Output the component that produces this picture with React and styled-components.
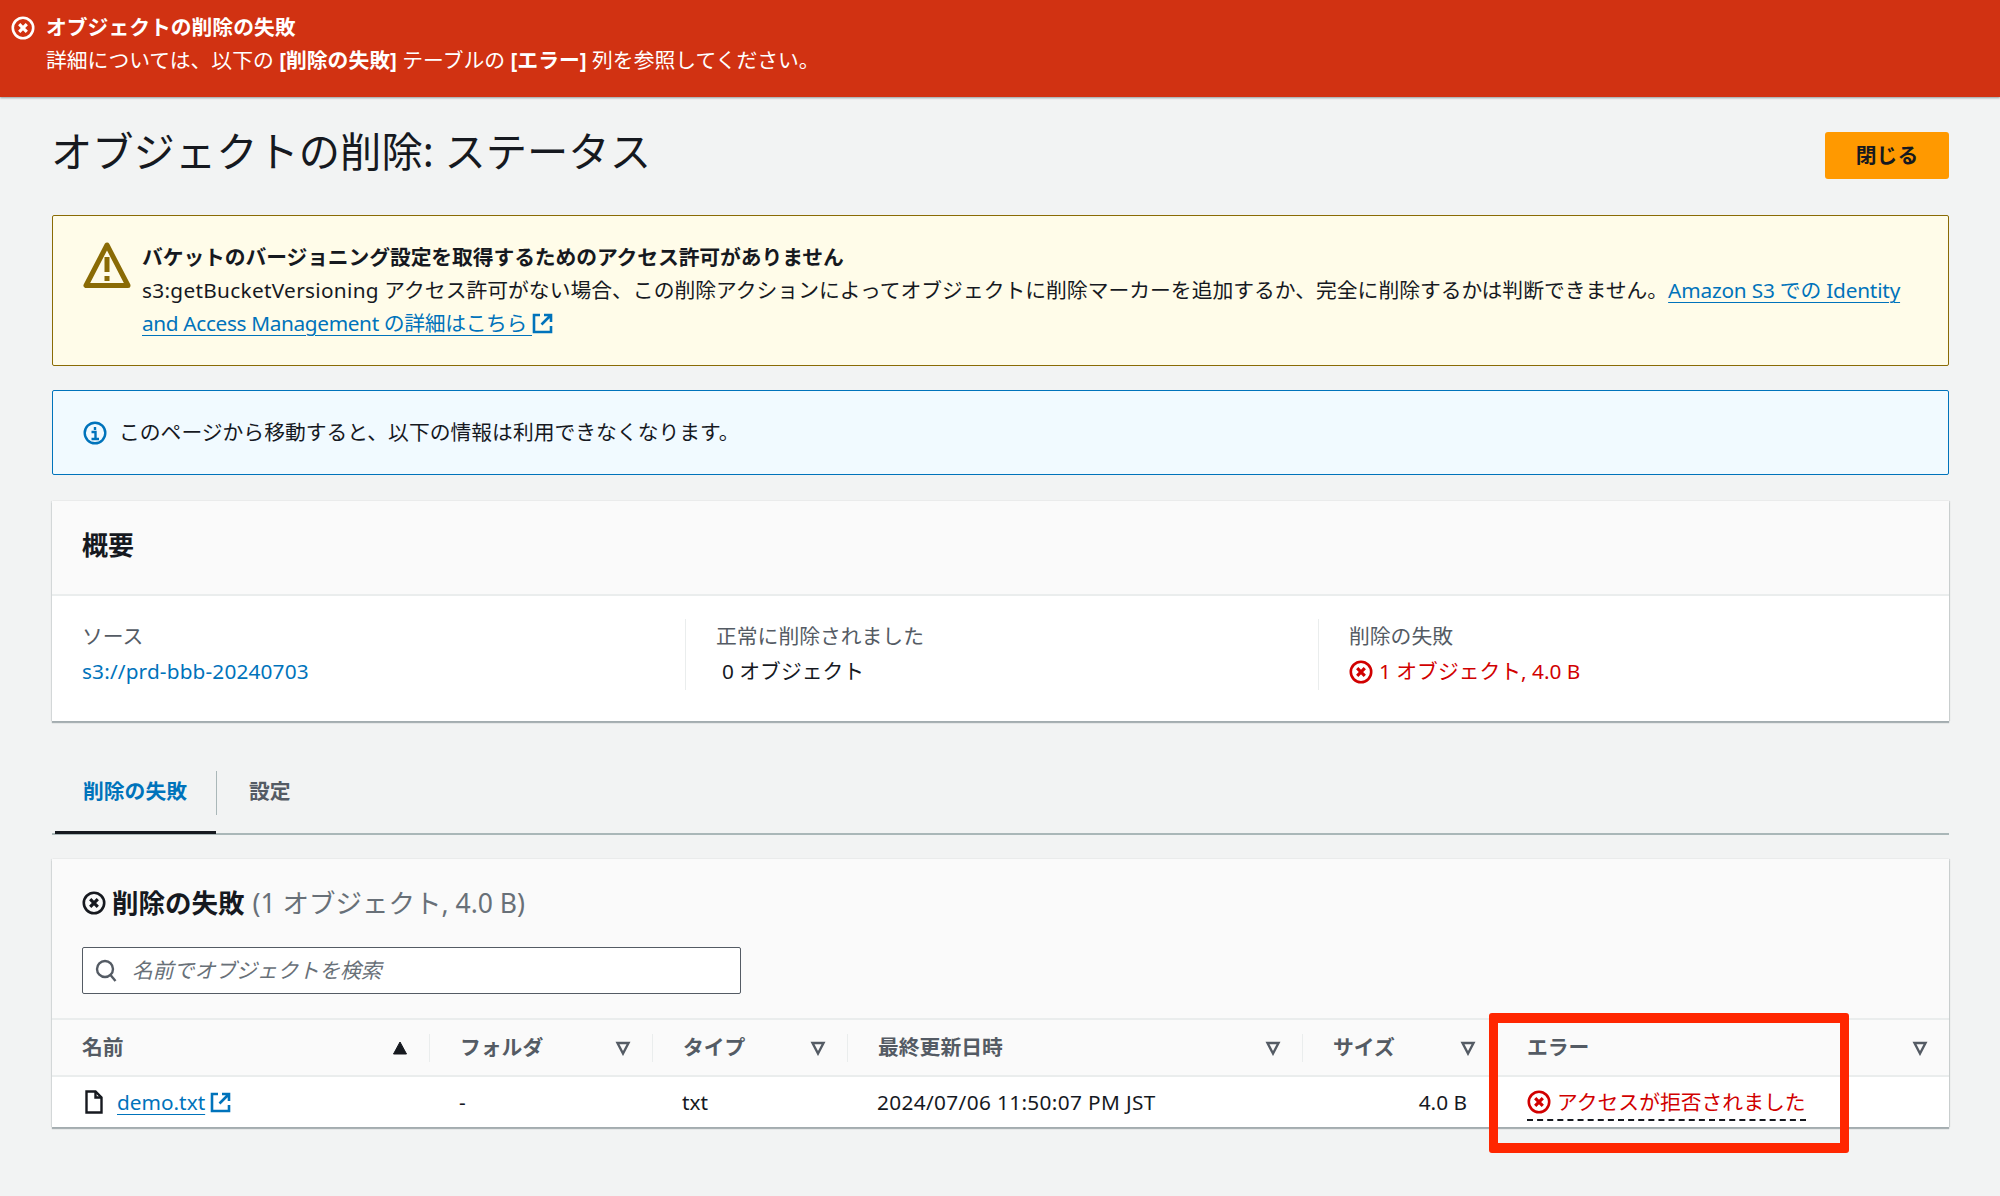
import React from "react";
import styled, { createGlobalStyle } from "styled-components";

const GlobalStyle = createGlobalStyle`
  html, body {
    margin: 0;
    background: #f2f3f3;
  }
  body {
    font-family: "Noto Sans", "Noto Sans CJK JP", sans-serif;
    font-size: 20.8px;
    line-height: 33px;
    color: #16191f;
  }
  * { box-sizing: border-box; }
`;

const Page = styled.div`
  min-height: 1196px;
`;

const Banner = styled.div`
  display: flex;
  gap: 11px;
  height: 97px;
  padding: 11px 11px 0;
  background: #d13212;
  color: #fff;
  box-shadow: 0 1px 2px rgba(0, 28, 36, 0.4);
`;

const BannerIcon = styled.span`
  display: flex;
  height: 33px;
  align-items: center;
`;

const BannerTitle = styled.div`
  font-weight: 700;
`;

const Main = styled.main`
  display: flex;
  flex-direction: column;
  padding: 0 51px 0 52px;
`;

const HeadRow = styled.div`
  display: flex;
  justify-content: space-between;
  align-items: flex-start;
  padding-top: 29px;
  height: 118px;
`;

const Title = styled.h1`
  margin: 0 0 0 -1px;
  font-size: 41.3px;
  line-height: 50px;
  font-weight: 400;
`;

const CloseButton = styled.button`
  width: 124px;
  height: 47px;
  margin-top: 6px;
  border: 0;
  border-radius: 3px;
  background: #ff9900;
  color: #16191f;
  font: inherit;
  font-weight: 700;
`;

const Flash = styled.div`
  display: flex;
  border: 1px solid ${(p) => p.$border};
  border-radius: 2px;
  background: ${(p) => p.$bg};
`;

const WarningFlash = styled(Flash)`
  gap: 11px;
  padding: 25px 0 25px 30px;
`;

const InfoFlash = styled(Flash)`
  align-items: center;
  gap: 12px;
  height: 85px;
  margin: 24px 0 26px;
  padding: 0 30px;
`;

const WarningBody = styled.div`
  white-space: nowrap;
`;

const Bold = styled.div`
  font-weight: 700;
  letter-spacing: -0.1px;
`;

const Link = styled.a`
  color: #0073bb;
  text-decoration: ${(p) => (p.$plain ? "none" : "underline")};
  text-underline-offset: 4px;
  text-decoration-thickness: 1px;
  letter-spacing: ${(p) => p.$ls || "normal"};
`;

const Tracked = styled.span`
  letter-spacing: ${(p) => p.$ls};
`;

const ExtIcon = styled.span`
  display: inline-flex;
  vertical-align: -3px;
  margin-left: ${(p) => p.$ml || "3px"};
`;

const Card = styled.section`
  background: #fff;
  box-shadow: 0 2px 1px rgba(0, 28, 36, 0.3), 1px 0 1px rgba(0, 28, 36, 0.12), -1px 0 1px rgba(0, 28, 36, 0.08);
`;

const CardHeader = styled.div`
  display: flex;
  align-items: center;
  height: 95px;
  padding: 0 30px 5px;
  background: #fafafa;
  border-bottom: 2px solid #eaeded;
  font-size: 26px;
  font-weight: 700;
`;

const SummaryGrid = styled.div`
  display: grid;
  grid-template-columns: 633px 633px 1fr;
  padding: 23px 0 31px;
`;

const SummaryCol = styled.div`
  height: 71px;
  padding: 0 30px;
  border-left: ${(p) => (p.$first ? "0" : "1px solid #eaeded")};
  line-height: 35px;
`;

const Label = styled.div`
  color: #545b64;
`;

const ErrorValue = styled.div`
  display: flex;
  align-items: center;
  gap: 6px;
  color: #d10000;
`;

const PlainValue = styled.div`
  padding-left: 6px;
`;

const Tabs = styled.div`
  display: flex;
  align-items: stretch;
  height: 114px;
  padding: 50px 0 0 3px;
  border-bottom: 2px solid #aab7b8;
`;

const Tab = styled.div`
  display: flex;
  align-items: flex-start;
  width: ${(p) => p.$w};
  padding: 4px 0 0 ${(p) => p.$pad};
  font-weight: 700;
  color: ${(p) => (p.$active ? "#0073bb" : "#545b64")};
  border-bottom: ${(p) => (p.$active ? "3px solid #16191f" : "0")};
  margin-bottom: -1px;
  position: relative;
  &::after {
    content: "";
    display: ${(p) => (p.$active ? "block" : "none")};
    position: absolute;
    right: -1px;
    top: 0;
    height: 44px;
    width: 1px;
    background: #aab7b8;
  }
`;

const TableWrap = styled.div`
  position: relative;
  margin-top: 24px;
`;

const TableTop = styled.div`
  height: 159px;
  padding: 27px 30px 0;
  background: #fafafa;
`;

const TableTitle = styled.div`
  display: flex;
  align-items: center;
  gap: 6px;
  font-size: 26.5px;
  line-height: 34px;
  font-weight: 700;
`;

const Count = styled.span`
  font-weight: 400;
  color: #687078;
  margin-left: 2px;
`;

const SearchBox = styled.div`
  display: flex;
  align-items: center;
  gap: 15px;
  width: 659px;
  height: 47px;
  margin-top: 27px;
  padding-left: 12px;
  border: 1px solid #545b64;
  border-radius: 2px;
  background: #fff;
  color: #687078;
  font-style: italic;
`;

const columns = "377px 223px 195px 455px 195px 1fr";

const HeadGrid = styled.div`
  display: grid;
  grid-template-columns: ${columns};
  height: 59px;
  align-items: center;
  background: #fafafa;
  border-top: 2px solid #eaeded;
  border-bottom: 2px solid #eaeded;
`;

const HeadCell = styled.div`
  display: flex;
  align-items: center;
  justify-content: space-between;
  height: 28px;
  padding: 0 21px 0 30px;
  font-weight: 700;
  color: #545b64;
  border-left: ${(p) => (p.$first ? "0" : "1px solid #eaeded")};
`;

const BodyGrid = styled.div`
  display: grid;
  grid-template-columns: ${columns};
  height: 50px;
  align-items: center;
`;

const BodyCell = styled.div`
  display: flex;
  align-items: center;
  justify-content: ${(p) => (p.$right ? "flex-end" : "flex-start")};
  padding: ${(p) => (p.$right ? "0 30px 0 0" : "0 0 0 30px")};
`;

const FileLink = styled.span`
  display: flex;
  align-items: center;
  gap: 14px;
  padding-left: 3px;
`;

const ErrorCell = styled.span`
  display: flex;
  align-items: center;
  gap: 6px;
  height: 35px;
  color: #d10000;
  border-bottom: 2px dashed #16191f;
  margin-top: 2px;
`;

const Annotation = styled.div`
  position: absolute;
  left: 1437px;
  top: 154px;
  width: 360px;
  height: 140px;
  border-style: solid;
  border-color: #ff2600;
  border-width: 10px 9px;
  border-radius: 3px;
  pointer-events: none;
`;

const NegativeIcon = ({ size = 24, color = "currentColor", weight = 2.6 }) => (
  <svg width={size} height={size} viewBox="0 0 24 24" fill="none" stroke={color}>
    <circle cx="12" cy="12" r="10.2" strokeWidth={weight} />
    <path d="M8.2 8.2l7.6 7.6M15.8 8.2l-7.6 7.6" strokeWidth="3.2" />
  </svg>
);

const ExternalIcon = ({ size = 21 }) => (
  <svg width={size} height={size} viewBox="0 0 21 21" fill="none" stroke="#0073bb" strokeWidth="2.6">
    <path d="M8 2H2v17h17v-6" />
    <path d="M12 2h7v7M19 2L9.5 11.5" />
  </svg>
);

const WarningIcon = () => (
  <svg width="48" height="48" viewBox="0 0 48 48" fill="none">
    <path d="M24 4L3 44.5h42z" stroke="#8a6b05" strokeWidth="5" strokeLinejoin="round" />
    <path d="M24 16v15M24 35v5" stroke="#8a6b05" strokeWidth="5" />
  </svg>
);

const InfoIcon = () => (
  <svg width="24" height="24" viewBox="0 0 24 24" fill="none" stroke="#0073bb">
    <circle cx="12" cy="12" r="10.3" strokeWidth="2.4" />
    <path d="M12 6v3M8.5 11H12.5V18M8.5 18h7.5" strokeWidth="2.4" />
  </svg>
);

const SearchIcon = () => (
  <svg width="22" height="24" viewBox="0 0 22 24" fill="none" stroke="#545b64" strokeWidth="2.4">
    <circle cx="10" cy="10" r="8" />
    <path d="M15.5 16l5 6" />
  </svg>
);

const FileIcon = () => (
  <svg width="18" height="24" viewBox="0 0 18 24" fill="none" stroke="#16191f" strokeWidth="2.4">
    <path d="M1.5 1.5h9l6 6v15h-15z" />
    <path d="M10.5 1.5v6h6" />
  </svg>
);

const SortIcon = ({ active }) => (
  <svg width="16" height="16" viewBox="0 0 16 16" fill={active ? "#16191f" : "none"} stroke={active ? "#16191f" : "#545b64"} strokeWidth="2.4">
    {active ? <path d="M8 2l6.5 12h-13z" strokeWidth="1" /> : <path d="M2.5 3h11L8 13.5z" />}
  </svg>
);

const headers = [
  { name: "名前", active: true },
  { name: "フォルダ" },
  { name: "タイプ" },
  { name: "最終更新日時" },
  { name: "サイズ" },
  { name: "エラー" },
];

export default function App() {
  return (
    <Page>
      <GlobalStyle />
      <Banner>
        <BannerIcon>
          <NegativeIcon color="#fff" />
        </BannerIcon>
        <div>
          <BannerTitle>オブジェクトの削除の失敗</BannerTitle>
          <div>
            詳細については、以下の <b>[削除の失敗]</b> テーブルの <b>[エラー]</b> 列を参照してください。
          </div>
        </div>
      </Banner>
      <Main>
        <HeadRow>
          <Title>オブジェクトの削除: ステータス</Title>
          <CloseButton>閉じる</CloseButton>
        </HeadRow>

        <WarningFlash $border="#8a6b05" $bg="#fffce9">
          <WarningIcon />
          <WarningBody>
            <Bold>バケットのバージョニング設定を取得するためのアクセス許可がありません</Bold>
            <div>
              <Tracked $ls="0.3px">s3:getBucketVersioning</Tracked> アクセス許可がない場合、この削除アクションによってオブジェクトに削除マーカーを追加するか、完全に削除するかは判断できません。
              <Link $ls="-0.2px">Amazon S3 での Identity</Link>
            </div>
            <div>
              <Link $ls="-0.35px">and Access Management の詳細はこちら </Link>
              <ExtIcon $ml="0">
                <ExternalIcon />
              </ExtIcon>
            </div>
          </WarningBody>
        </WarningFlash>

        <InfoFlash $border="#0073bb" $bg="#f1faff">
          <InfoIcon />
          このページから移動すると、以下の情報は利用できなくなります。
        </InfoFlash>

        <Card>
          <CardHeader>概要</CardHeader>
          <SummaryGrid>
            <SummaryCol $first>
              <Label>ソース</Label>
              <Link $plain $ls="0.15px">s3://prd-bbb-20240703</Link>
            </SummaryCol>
            <SummaryCol>
              <Label>正常に削除されました</Label>
              <PlainValue>0 オブジェクト</PlainValue>
            </SummaryCol>
            <SummaryCol>
              <Label>削除の失敗</Label>
              <ErrorValue>
                <NegativeIcon />1 オブジェクト, 4.0 B
              </ErrorValue>
            </SummaryCol>
          </SummaryGrid>
        </Card>

        <Tabs>
          <Tab $active $w="161px" $pad="28px">
            削除の失敗
          </Tab>
          <Tab $w="120px" $pad="33px">
            設定
          </Tab>
        </Tabs>

        <TableWrap>
          <Card>
            <TableTop>
              <TableTitle>
                <NegativeIcon />
                削除の失敗 <Count>(1 オブジェクト, 4.0 B)</Count>
              </TableTitle>
              <SearchBox>
                <SearchIcon />
                名前でオブジェクトを検索
              </SearchBox>
            </TableTop>
            <HeadGrid>
              {headers.map((h, i) => (
                <HeadCell key={h.name} $first={i === 0 || i === 5}>
                  {h.name}
                  <SortIcon active={h.active} />
                </HeadCell>
              ))}
            </HeadGrid>
            <BodyGrid>
              <BodyCell>
                <FileLink>
                  <FileIcon />
                  <span>
                    <Link>demo.txt</Link>
                    <ExtIcon $ml="5px">
                      <ExternalIcon />
                    </ExtIcon>
                  </span>
                </FileLink>
              </BodyCell>
              <BodyCell>-</BodyCell>
              <BodyCell>txt</BodyCell>
              <BodyCell>
                <Tracked $ls="0.35px">2024/07/06 11:50:07 PM JST</Tracked>
              </BodyCell>
              <BodyCell $right>4.0 B</BodyCell>
              <BodyCell>
                <ErrorCell>
                  <NegativeIcon />
                  アクセスが拒否されました
                </ErrorCell>
              </BodyCell>
            </BodyGrid>
          </Card>
          <Annotation />
        </TableWrap>
      </Main>
    </Page>
  );
}
